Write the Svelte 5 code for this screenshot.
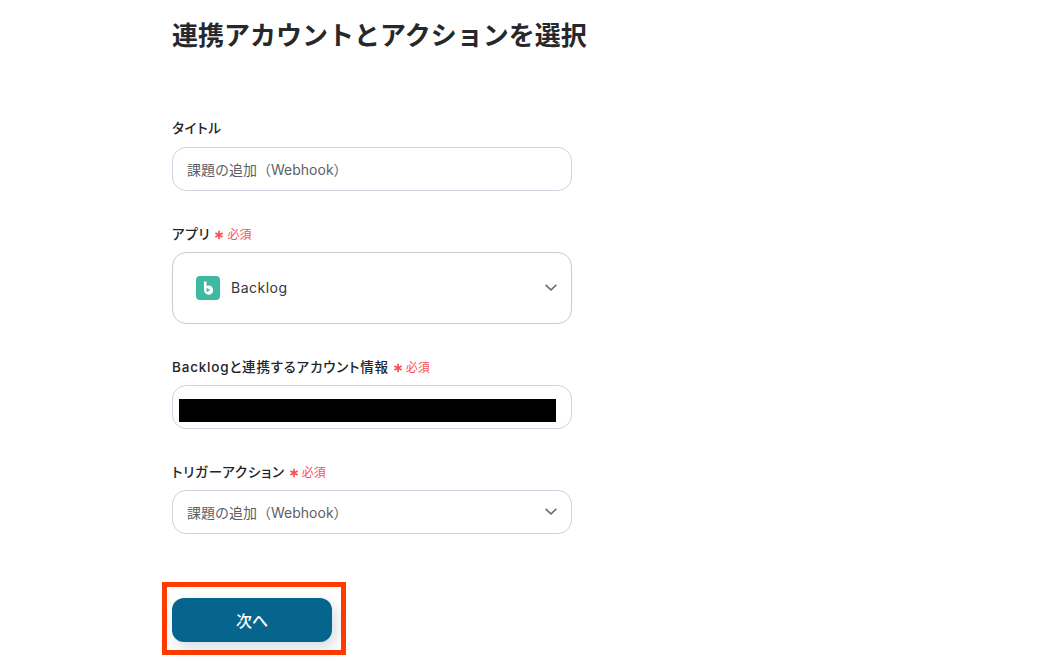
<script>
  const required = '必須';
</script>

{#snippet star()}
  <svg class="star" viewBox="0 0 10 10" width="10" height="10" aria-hidden="true">
    <path d="M5 .8v8.4M1.4 2.9l7.2 4.2M8.6 2.9 1.4 7.1" fill="none" stroke="#fb4f57" stroke-width="1.7" />
  </svg>
{/snippet}

{#snippet chevron()}
  <svg class="chevron" viewBox="0 0 12 8" width="12" height="8" aria-hidden="true">
    <path d="M1.2 1.4 6 6l4.8-4.6" fill="none" stroke="#6a6d73" stroke-width="1.7" stroke-linecap="round" stroke-linejoin="round" />
  </svg>
{/snippet}

<main class="page">
  <h1 class="title">連携アカウントとアクションを選択</h1>

  <section class="form">
    <div class="field title-field">
      <div class="label-row"><span class="label">タイトル</span></div>
      <div class="control"><span class="value">課題の追加（Webhook）</span></div>
    </div>

    <div class="field app-field">
      <div class="label-row short">
        <span class="label">アプリ</span>
        <span class="req">{@render star()}{required}</span>
      </div>
      <div class="control tall">
        <svg class="logo" viewBox="0 0 24 24" width="24" height="24" aria-hidden="true">
          <rect width="24" height="24" rx="4" fill="#3fb9a0" />
          <path fill="#fff" fill-rule="evenodd" d="M8 5.5h2.5v4.6c.7-.4 1.4-.6 2.2-.6a4.6 4.6 0 1 1-4.7 4.6zM10.6 11.8v4.4l3.6-2.2z" />
        </svg>
        <span class="app-name">Backlog</span>
        {@render chevron()}
      </div>
    </div>

    <div class="field account-field">
      <div class="label-row short">
        <span class="label">Backlogと連携するアカウント情報</span>
        <span class="req">{@render star()}{required}</span>
      </div>
      <div class="control masked"><div class="mask"></div></div>
    </div>

    <div class="field trigger-field">
      <div class="label-row short">
        <span class="label">トリガーアクション</span>
        <span class="req">{@render star()}{required}</span>
      </div>
      <div class="control">
        <span class="value">課題の追加（Webhook）</span>
        {@render chevron()}
      </div>
    </div>
  </section>

  <div class="highlight">
    <button class="next" type="button">次へ</button>
  </div>
</main>

<style>
  :global(body) {
    background: #fff;
    height: 672px;
    overflow: hidden;
  }

  .page {
    width: 420px;
    margin-left: 172px;
    padding-top: 17px;
    font-family: Inter, 'Noto Sans CJK JP', sans-serif;
    color: #26282c;
  }

  .title {
    margin: 0;
    font-size: 26px;
    line-height: 37px;
    font-weight: 600;
    white-space: nowrap;
  }

  .form {
    width: 400px;
  }

  .title-field { margin-top: 65px; }
  .app-field { margin-top: 34px; }
  .account-field { margin-top: 34px; }
  .trigger-field { margin-top: 34px; }

  .label-row {
    display: flex;
    align-items: center;
    height: 19px;
    margin-bottom: 9px;
    white-space: nowrap;
  }

  .label-row.short {
    margin-bottom: 8px;
  }

  .label {
    font-size: 13.5px;
    font-weight: 500;
    line-height: 19px;
    letter-spacing: 0.8px;
    color: #232529;
    font-feature-settings: 'palt';
  }

  .req {
    display: inline-flex;
    align-items: center;
    margin-left: 4px;
    font-size: 12px;
    line-height: 19px;
    color: #fb4f57;
  }

  .star {
    flex: none;
    margin-right: 3px;
  }

  .control {
    display: flex;
    align-items: center;
    box-sizing: border-box;
    height: 44px;
    padding: 0 14px;
    background: #fff;
    border: 1px solid #cfd2de;
    border-radius: 14px;
  }

  .control.tall {
    height: 72px;
    padding-left: 23px;
    border-color: #c9cad2;
  }

  .control.masked {
    padding: 0 15px 0 6px;
    align-items: flex-start;
  }

  .mask {
    width: 377px;
    height: 23px;
    margin-top: 13px;
    background: #000;
  }

  .value {
    font-size: 14px;
    color: #5d5f66;
    white-space: nowrap;
  }

  .logo {
    flex: none;
  }

  .app-name {
    margin: 0 0 1px 11px;
    font-size: 14px;
    letter-spacing: 0.5px;
    color: #33353a;
  }

  .chevron {
    flex: none;
    margin-left: auto;
  }

  .highlight {
    box-sizing: border-box;
    width: 184px;
    height: 73px;
    margin: 48px 0 0 -10px;
    padding: 11px 0 0 5px;
    border: 5px solid #ff3b00;
  }

  .next {
    display: block;
    width: 160px;
    height: 44px;
    padding: 0;
    border: 0;
    border-radius: 12px;
    background: #05658c;
    box-shadow: 4px 6px 14px rgba(40, 60, 90, 0.18);
    color: #fff;
    font: 500 16px Inter, 'Noto Sans CJK JP', sans-serif;
  }
</style>
